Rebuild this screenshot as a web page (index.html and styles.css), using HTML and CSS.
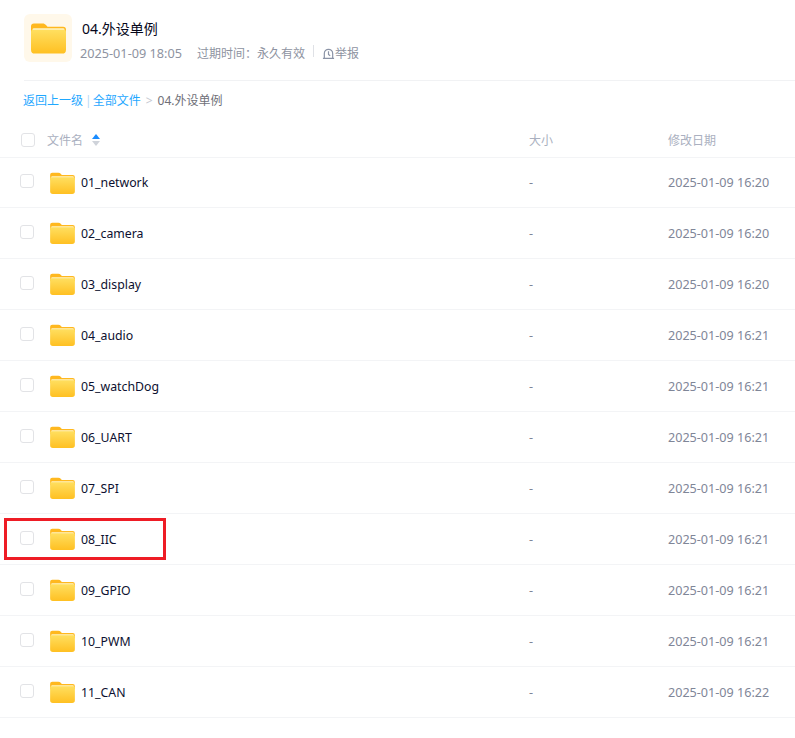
FILE: index.html
```html
<!DOCTYPE html>
<html lang="zh">
<head>
<meta charset="utf-8">
<title>04.外设单例</title>
<link rel="stylesheet" href="styles.css">
</head>
<body>
<svg class="defs" width="0" height="0" aria-hidden="true">
  <defs>
    <linearGradient id="fbody" x1="0" y1="0" x2="0" y2="1">
      <stop offset="0" stop-color="#ffdf60"/>
      <stop offset="1" stop-color="#ffc022"/>
    </linearGradient>
    <symbol id="folder" viewBox="0 0 36 32">
      <path d="M0 4a3 3 0 0 1 3-3h9c1.500 0 2.500.6 3.400 1.600L17 4.500h16a3 3 0 0 1 3 3V12H0z" fill="#ffb81f"/>
      <rect x="1.500" y="6" width="33" height="8" rx="1.500" fill="#fff3c4"/>
      <path d="M0 9.500a2 2 0 0 1 2-2h32a2 2 0 0 1 2 2V28a4 4 0 0 1-4 4H4a4 4 0 0 1-4-4z" fill="url(#fbody)"/>
    </symbol>
  </defs>
</svg>
<main class="page">
  <header class="head">
    <div class="head-icon"><svg class="folder-lg"><use href="#folder"/></svg></div>
    <div class="head-info">
      <h1 class="title">04.外设单例</h1>
      <div class="meta">
        <span class="meta-date">2025-01-09 18:05</span>
        <span class="meta-expire">过期时间：永久有效</span>
        <span class="meta-sep"></span>
        <span class="report">
          <svg class="report-icon" viewBox="0 0 14 14"><path d="M2.500 12V7a4.500 4.500 0 0 1 9 0v5M1 12.200h12M7 4.500V8l1.800 1.500" fill="none" stroke="#8b93a6" stroke-width="1.300"/></svg>举报
        </span>
      </div>
    </div>
  </header>
  <nav class="crumbs">
    <a class="link">返回上一级</a><span class="bar">|</span><a class="link">全部文件</a><span class="gt">&gt;</span><span class="current">04.外设单例</span>
  </nav>
  <div class="thead">
    <span class="check check-h"></span>
    <span class="col-name th">文件名<span class="sort"><i class="up"></i><i class="down"></i></span></span>
    <span class="col-size th">大小</span>
    <span class="col-date th">修改日期</span>
  </div>
  <div class="row"><span class="check"></span><svg class="folder"><use href="#folder"/></svg><span class="col-name name">01_network</span><span class="col-size cell">-</span><span class="col-date cell">2025-01-09 16:20</span></div>
  <div class="row"><span class="check"></span><svg class="folder"><use href="#folder"/></svg><span class="col-name name">02_camera</span><span class="col-size cell">-</span><span class="col-date cell">2025-01-09 16:20</span></div>
  <div class="row"><span class="check"></span><svg class="folder"><use href="#folder"/></svg><span class="col-name name">03_display</span><span class="col-size cell">-</span><span class="col-date cell">2025-01-09 16:20</span></div>
  <div class="row"><span class="check"></span><svg class="folder"><use href="#folder"/></svg><span class="col-name name">04_audio</span><span class="col-size cell">-</span><span class="col-date cell">2025-01-09 16:21</span></div>
  <div class="row"><span class="check"></span><svg class="folder"><use href="#folder"/></svg><span class="col-name name">05_watchDog</span><span class="col-size cell">-</span><span class="col-date cell">2025-01-09 16:21</span></div>
  <div class="row"><span class="check"></span><svg class="folder"><use href="#folder"/></svg><span class="col-name name">06_UART</span><span class="col-size cell">-</span><span class="col-date cell">2025-01-09 16:21</span></div>
  <div class="row"><span class="check"></span><svg class="folder"><use href="#folder"/></svg><span class="col-name name">07_SPI</span><span class="col-size cell">-</span><span class="col-date cell">2025-01-09 16:21</span></div>
  <div class="row row-marked"><span class="check"></span><svg class="folder"><use href="#folder"/></svg><span class="col-name name">08_IIC</span><span class="col-size cell">-</span><span class="col-date cell">2025-01-09 16:21</span><span class="marker"></span></div>
  <div class="row"><span class="check"></span><svg class="folder"><use href="#folder"/></svg><span class="col-name name">09_GPIO</span><span class="col-size cell">-</span><span class="col-date cell">2025-01-09 16:21</span></div>
  <div class="row"><span class="check"></span><svg class="folder"><use href="#folder"/></svg><span class="col-name name">10_PWM</span><span class="col-size cell">-</span><span class="col-date cell">2025-01-09 16:21</span></div>
  <div class="row"><span class="check"></span><svg class="folder"><use href="#folder"/></svg><span class="col-name name">11_CAN</span><span class="col-size cell">-</span><span class="col-date cell">2025-01-09 16:22</span></div>
</main>
</body>
</html>
```
FILE: styles.css
```css
html, body {
  margin: 0;
  padding: 0;
  background: #fff;
}
body {
  font-family: "Noto Sans", "Noto Sans CJK SC", sans-serif;
  font-size: 12px;
  overflow: hidden;
}
.defs {
  position: absolute;
}
.page {
  display: flex;
  flex-direction: column;
  width: 795px;
}
.head {
  display: flex;
  align-items: flex-start;
  margin-left: 24px;
  height: 66px;
  padding-top: 14px;
  border-bottom: 1px solid #f1f2f4;
}
.head-icon {
  width: 48px;
  height: 48px;
  border-radius: 6px;
  background: #fff8ea;
  display: flex;
  align-items: center;
  justify-content: center;
}
.folder-lg {
  width: 35px;
  height: 32px;
}
.head-info {
  margin-left: 10px;
}
.title {
  margin: 5px 0 0;
  font-size: 14px;
  line-height: 20px;
  font-weight: 400;
  color: #06071a;
}
.meta {
  display: flex;
  align-items: center;
  margin-top: 5px;
  margin-left: -2px;
  height: 18px;
  color: #8e93a1;
  font-size: 12px;
}
.meta-date {
  font-size: 12.700px;
}
.meta-expire {
  margin-left: 15px;
}
.meta-sep {
  width: 1px;
  height: 12px;
  margin: 0 8px 4px 8px;
  background: #dfe1e6;
}
.report {
  display: flex;
  align-items: center;
}
.report-icon {
  width: 13px;
  height: 13px;
}
.crumbs {
  display: flex;
  align-items: center;
  height: 38px;
  padding-left: 23px;
  font-size: 12px;
}
.link {
  color: #1fa8ff;
}
.bar {
  color: #b6d9f5;
  margin: 0 1px 0 2px;
}
.gt {
  color: #c5c9d1;
  margin: 0 5px;
}
.current {
  color: #6f6f78;
}
.thead,
.row {
  position: relative;
  display: flex;
  align-items: center;
  border-bottom: 1px solid #f3f4f6;
}
.thead {
  height: 35px;
  padding-top: 3px;
}
.row {
  height: 50px;
}
.thead + .row {
  height: 49px;
}
.check {
  flex: none;
  box-sizing: border-box;
  width: 14px;
  height: 14px;
  margin: -3px 0 0 20px;
  border: 1px solid #e2e3e6;
  border-radius: 3px;
  background: #fff;
}
.check-h {
  margin: 0 0 0 21px;
}
.folder {
  flex: none;
  width: 25px;
  height: 22px;
  margin-left: 16px;
}
.col-name {
  flex: 1;
}
.th {
  color: #aab0c0;
  font-size: 12px;
}
.thead .col-name {
  display: flex;
  align-items: center;
  margin-left: 12px;
}
.name {
  margin-left: 6px;
  color: #0c1030;
  font-size: 12.300px;
}
.sort {
  display: inline-flex;
  flex-direction: column;
  gap: 2px;
  margin-left: 9px;
}
.sort i {
  display: block;
  width: 0;
  height: 0;
  border-left: 4px solid transparent;
  border-right: 4px solid transparent;
}
.up {
  border-bottom: 5px solid #1a8cff;
}
.down {
  border-top: 5px solid #cfd3da;
}
.col-size {
  width: 139px;
  flex: none;
}
.col-date {
  width: 127px;
  flex: none;
}
.cell {
  color: #7f8698;
  font-size: 12.600px;
}
.marker {
  position: absolute;
  left: 4px;
  top: 4px;
  width: 162px;
  height: 42px;
  box-sizing: border-box;
  border: 3px solid #ee1c25;
  pointer-events: none;
}
```
